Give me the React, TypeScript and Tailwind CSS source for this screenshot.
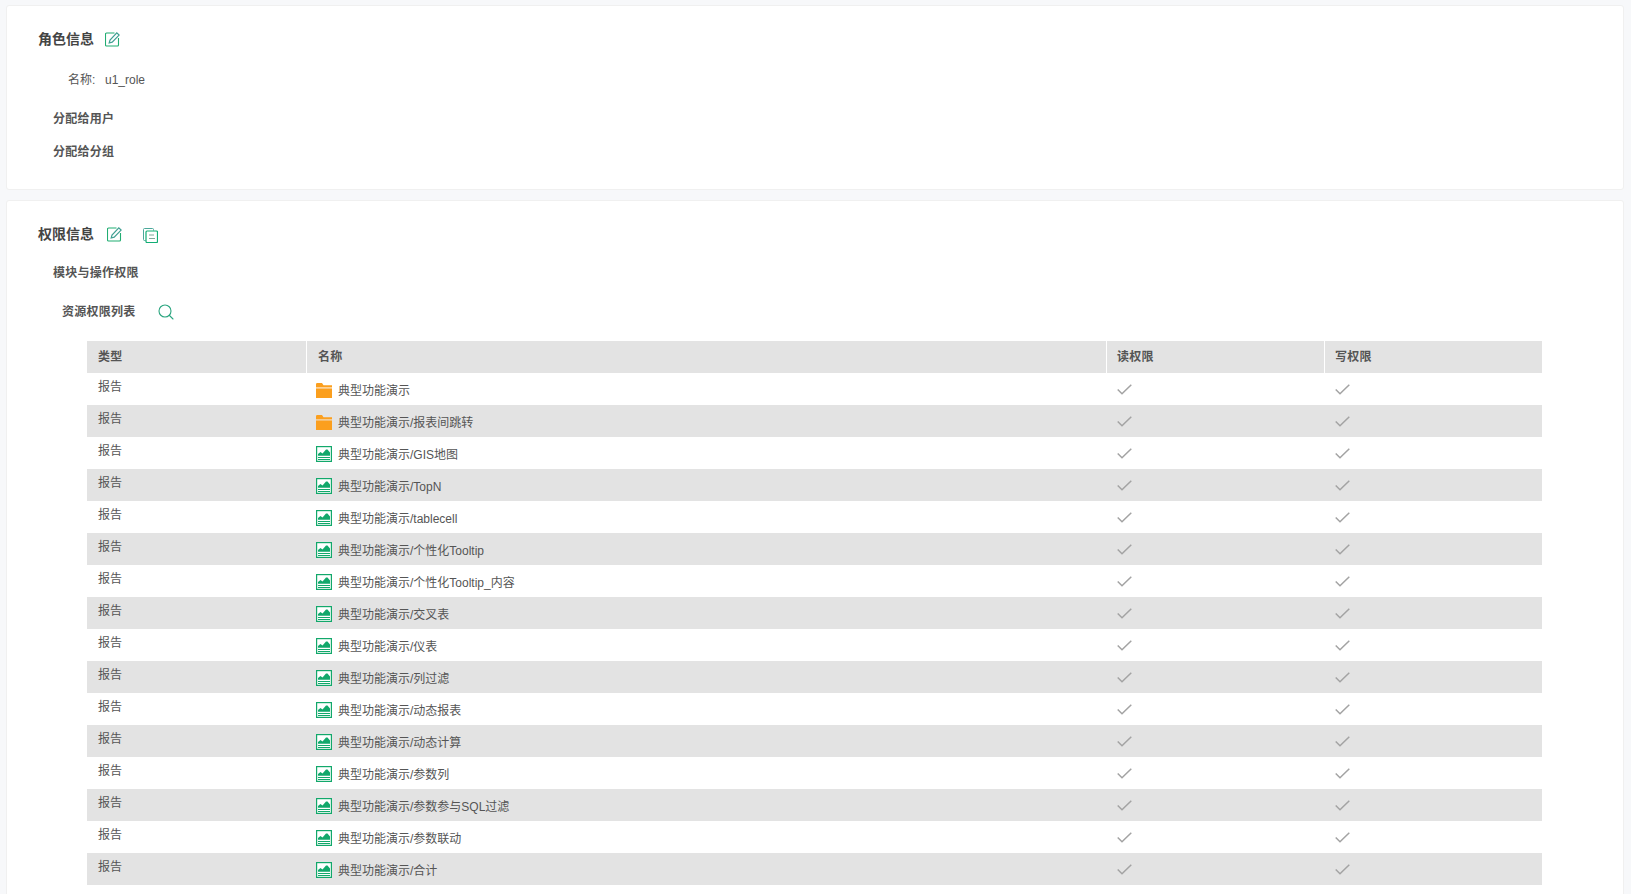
import React from "react";

const names = [
  "典型功能演示",
  "典型功能演示/报表间跳转",
  "典型功能演示/GIS地图",
  "典型功能演示/TopN",
  "典型功能演示/tablecell",
  "典型功能演示/个性化Tooltip",
  "典型功能演示/个性化Tooltip_内容",
  "典型功能演示/交叉表",
  "典型功能演示/仪表",
  "典型功能演示/列过滤",
  "典型功能演示/动态报表",
  "典型功能演示/动态计算",
  "典型功能演示/参数列",
  "典型功能演示/参数参与SQL过滤",
  "典型功能演示/参数联动",
  "典型功能演示/合计",
];

const EditIcon = () => (
  <svg width="15" height="15" viewBox="0 0 15 15" fill="none" className="block">
    <path d="M9.500 1H1.500a1 1 0 0 0-1 1v11a1 1 0 0 0 1 1h11a1 1 0 0 0 1-1V6" stroke="#21ad72" strokeWidth="1.100" />
    <path d="M4.200 11l.8-3L11.800.9l2.300 2.200L7.200 10.200z" stroke="#3f9f92" strokeWidth="1.200" />
  </svg>
);

const CopyIcon = () => (
  <svg width="15" height="15" viewBox="0 0 15 15" fill="none" className="block">
    <path d="M2.500 12.500H1.500a1 1 0 0 1-1-1V1.500a1 1 0 0 1 1-1h8a1 1 0 0 1 1 1v1" stroke="#4aa89a" />
    <rect x="3" y="3" width="11.500" height="11.500" rx="1" stroke="#12ad74" strokeWidth="1.200" />
    <path d="M6 7h5M6 10.500h6" stroke="#7fa89a" strokeWidth="1.200" />
  </svg>
);

const SearchIcon = () => (
  <svg width="16" height="16" viewBox="0 0 16 16" fill="none" className="block">
    <circle cx="7" cy="7" r="6" stroke="#2aa57f" strokeWidth="1.100" />
    <path d="M11.500 11.500l3.500 3.500" stroke="#2aa57f" strokeWidth="1.100" strokeLinecap="round" />
  </svg>
);

const FolderIcon = () => (
  <svg width="16" height="15" viewBox="0 0 16 15" className="block">
    <path d="M0 1.500C0 .7.500 0 1 0h5l1.500 2.200H16V4.500H0z" fill="#fb9f1e" />
    <rect x="0" y="4.500" width="16" height="1" fill="#fdd6a0" />
    <path d="M0 5.500h16V15H0z" fill="#fb9f1e" />
  </svg>
);

const ReportIcon = () => (
  <svg width="16" height="16" viewBox="0 0 16 16" fill="none" className="block">
    <rect x="0.600" y="0.600" width="14.800" height="14.800" fill="#fff" stroke="#12a86b" strokeWidth="1.200" />
    <path d="M2 9.800V8l2.500-2L6.500 7.500 10 3.500h1.500l2.500 3v3.300z" fill="#12a86b" />
    <path d="M2 11.500h12M2 13.500h12" stroke="#12a86b" />
  </svg>
);

const CheckIcon = () => (
  <svg width="15" height="11" viewBox="0 0 15 11" fill="none" className="block">
    <path d="M.700 5.500L5 9.700 14.300 .700" stroke="#a3a3a3" strokeWidth="1.500" />
  </svg>
);

export default function App() {
  return (
    <div className="h-[894px] overflow-hidden bg-[#f7f8fa] pl-[6px] pr-[7px] pt-[5px] font-['Liberation_Sans','Noto_Sans_CJK_SC',sans-serif] text-xs text-[#555]">
      {/* 角色信息 */}
      <section className="h-[185px] rounded-[3px] border border-[#f0f0f0] bg-white pl-[31px] pt-[25px]">
        <div className="flex h-4 items-center">
          <h2 className="w-[67px] text-sm font-bold text-[#444]">角色信息</h2>
          <EditIcon />
        </div>
        <div className="mt-[25px] flex h-4 items-center pl-[30px]">
          <span className="w-[37px]">名称:</span>
          <span>u1_role</span>
        </div>
        <div className="mt-[23px] h-4 pl-[15px] font-bold tracking-[0.25px]">分配给用户</div>
        <div className="mt-[17px] h-4 pl-[15px] font-bold tracking-[0.25px]">分配给分组</div>
      </section>

      {/* 权限信息 */}
      <section className="mt-[10px] h-[720px] rounded-[3px] border border-[#f0f0f0] bg-white pl-[31px] pt-[25px]">
        <div className="flex h-4 items-center">
          <h2 className="w-[69px] text-sm font-bold text-[#444]">权限信息</h2>
          <EditIcon />
          <div className="ml-[21px] mt-[2px]">
            <CopyIcon />
          </div>
        </div>
        <div className="mt-[23px] h-4 pl-[15px] font-bold tracking-[0.25px]">模块与操作权限</div>
        <div className="mt-[23px] flex h-4 items-center pl-[24px]">
          <span className="w-[96px] font-bold tracking-[0.25px]">资源权限列表</span>
          <SearchIcon />
        </div>

        {/* 资源权限列表 */}
        <div className="ml-[49px] mt-[21px] w-[1455px]">
          <div className="flex h-8 items-center bg-[#e3e3e3] font-bold tracking-[0.25px]">
            <div className="flex h-full w-[220px] items-center border-r border-white pl-[11px]">类型</div>
            <div className="flex h-full w-[800px] items-center border-r border-white pl-[11px]">名称</div>
            <div className="flex h-full w-[218px] items-center border-r border-white pl-[10px]">读权限</div>
            <div className="flex h-full flex-1 items-center pl-[10px]">写权限</div>
          </div>
          {names.map((name, i) => (
            <div key={name} className={`flex h-8 items-center ${i % 2 === 1 ? "bg-[#e3e3e3]" : "bg-white"}`}>
              <div className="w-[220px] pb-[5px] pl-[11px]">报告</div>
              <div className="flex w-[800px] items-center pl-[9px]">
                <div className="flex w-[22px] justify-start pt-[2px]">{i < 2 ? <FolderIcon /> : <ReportIcon />}</div>
                <span className="pt-[4px]">{name}</span>
              </div>
              <div className="w-[218px] pl-[10px]">
                <CheckIcon />
              </div>
              <div className="flex-1 pl-[10px]">
                <CheckIcon />
              </div>
            </div>
          ))}
        </div>
      </section>
    </div>
  );
}
